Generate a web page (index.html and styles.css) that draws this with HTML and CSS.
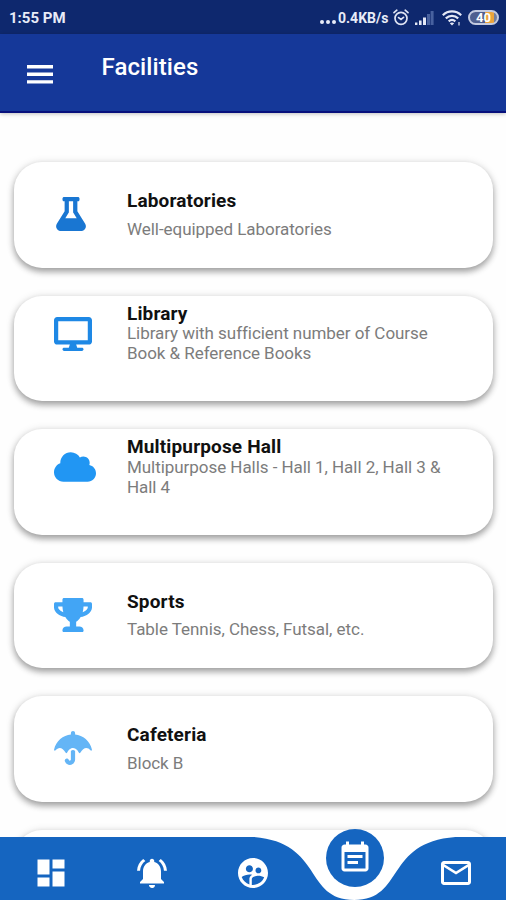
FILE: index.html
```
<!DOCTYPE html>
<html lang="en">
	<head>
		<meta charset="utf-8">
		<title>Facilities</title>
		<link rel="stylesheet" href="styles.css">
	</head>
	<body>
		<div class="status">
			<span class="time">1:55 PM</span>
			<span class="dots"><i></i><i></i><i></i></span>
			<span class="speed">0.4KB/s</span>
			<svg class="alarm" width="16" height="17" viewBox="0 0 16 17" fill="none" stroke="#dfe4f4" stroke-width="1.7" stroke-linecap="round">
				<circle cx="8" cy="9.3" r="6"/>
				<path d="M1 3.6L3.8 1.2M15 3.6L12.2 1.2M5.6 8.6L8 10.4l2.5-2"/>
			</svg>
			<svg class="signal" width="19" height="16" viewBox="0 0 19 16" fill="#e4e8f6">
				<path d="M0 12.5h2.4v2.5H0zM4 10.5h2.6v4.5H4zM8 7.5h3v7.5H8z"/>
				<path d="M12 4h3v11H12zM15.6 1h3v14h-3z" fill="#48619f"/>
			</svg>
			<svg class="wifi" width="20" height="16" viewBox="0 0 20 16" fill="none" stroke="#e4e8f6" stroke-width="2.2">
				<path d="M.8 5.2c5.2-5 13.2-5 18.4 0M3.8 8.4c3.6-3.4 8.8-3.4 12.4 0M6.7 11.4c2-1.8 4.6-1.8 6.6 0"/>
				<path d="M10 15.4l-2.2-2.2c1.3-1 3.1-1 4.4 0z" fill="#e4e8f6" stroke="none"/>
				<path d="M17 12v3.4" stroke-width="1.2"/>
			</svg>
			<span class="battery">40</span>
		</div>
		<div class="header">
			<svg class="menu" width="26" height="19" viewBox="0 0 26 19" fill="#fff"><path d="M0 0h26v3.4H0zM0 7.6h26V11H0zM0 15.2h26v3.4H0z"/></svg>
			<h1>Facilities</h1>
		</div>

		<div class="list">
			<div class="card">
				<div class="icon flask">
					<svg width="30" height="34" viewBox="0 0 448 512" fill="#1976d2"><path d="M437.2 403.5L320 215V64h8c13.3 0 24-10.7 24-24V24c0-13.3-10.7-24-24-24H120c-13.3 0-24 10.7-24 24v16c0 13.3 10.7 24 24 24h8v151L10.8 403.5C-18.5 450.6 15.3 512 70.9 512h306.2c55.7 0 89.4-61.5 60.1-108.5zM137.9 320l48.2-77.6c3.7-5.2 5.8-11.6 5.8-18.4V64h64v160c0 6.9 2.2 13.2 5.8 18.4l48.2 77.6h-172z"/></svg>
				</div>
				<div class="text">
					<h2>Laboratories</h2>
					<p>Well-equipped Laboratories</p>
				</div>
			</div>
			<div class="card two">
				<div class="icon">
					<svg width="38" height="34" viewBox="0 0 576 512" fill="#1e88e5"><path d="M528 0H48C21.5 0 0 21.5 0 48v320c0 26.5 21.5 48 48 48h192l-16 48h-72c-13.3 0-24 10.7-24 24s10.7 24 24 24h272c13.3 0 24-10.7 24-24s-10.7-24-24-24h-72l-16-48h192c26.5 0 48-21.5 48-48V48c0-26.5-21.5-48-48-48zm-16 352H64V64h448v288z"/></svg>
				</div>
				<div class="text">
					<h2>Library</h2>
					<p>Library with sufficient number of Course<br>Book &amp; Reference Books</p>
				</div>
			</div>
			<div class="card two">
				<div class="icon">
					<svg width="42" height="34" viewBox="0 0 640 512" fill="#2196f3"><path d="M537.6 226.6c4.1-10.7 6.4-22.4 6.4-34.6 0-53-43-96-96-96-19.7 0-38.1 6-53.3 16.2C367 64.2 315.3 32 256 32c-88.4 0-160 71.6-160 160 0 2.7.1 5.4.2 8.1C40.2 219.8 0 273.2 0 336c0 79.5 64.5 144 144 144h368c70.7 0 128-57.3 128-128 0-61.9-44-113.6-102.4-125.4z"/></svg>
				</div>
				<div class="text">
					<h2>Multipurpose Hall</h2>
					<p>Multipurpose Halls - Hall 1, Hall 2, Hall 3 &amp;<br>Hall 4</p>
				</div>
			</div>
			<div class="card">
				<div class="icon">
					<svg width="38" height="34" viewBox="0 0 576 512" fill="#42a5f5"><path d="M552 64H448V24c0-13.3-10.7-24-24-24H152c-13.3 0-24 10.7-24 24v40H24C10.7 64 0 74.7 0 88v56c0 35.7 22.5 72.4 61.9 100.7 31.5 22.7 69.8 37.1 110 41.7C203.3 338.5 240 360 240 360v72h-48c-35.3 0-64 20.7-64 56v12c0 6.6 5.4 12 12 12h296c6.6 0 12-5.4 12-12v-12c0-35.3-28.7-56-64-56h-48v-72s36.7-21.5 68.1-73.6c40.3-4.6 78.6-19 110-41.7 39.3-28.3 61.9-65 61.9-100.7V88c0-13.3-10.7-24-24-24zM99.3 192.8C74.9 175.2 64 155.6 64 144v-16h64.2c1 32.6 5.8 61.2 12.8 86.2-15.1-5.2-29.2-12.4-41.7-21.4zM512 144c0 16.1-17.7 36.1-35.3 48.8-12.5 9-26.7 16.2-41.8 21.4 7-25 11.8-53.6 12.8-86.2H512v16z"/></svg>
				</div>
				<div class="text">
					<h2>Sports</h2>
					<p>Table Tennis, Chess, Futsal, etc.</p>
				</div>
			</div>
			<div class="card">
				<div class="icon">
					<svg width="38" height="34" viewBox="0 0 576 512" fill="#64b5f6"><path d="M575.7 280.8C547.1 144.5 437.3 62.6 320 49.9V32c0-17.7-14.3-32-32-32s-32 14.3-32 32v17.9C138.3 62.6 29.5 144.5.3 280.8c-2.2 10.1 8.5 21.3 18.7 11.4 52-55 107.7-52.4 158.6 37 5.3 9.5 14.9 8.6 19.7 0 20.2-35.4 44.9-73.2 90.7-73.2 58.5 0 88.2 68.8 90.7 73.2 4.8 8.6 14.4 9.5 19.7 0 51-89.5 107.1-91.4 158.6-37 10.3 10 20.9-1.3 18.7-11.4zM256 301.7V432c0 8.8-7.2 16-16 16-7.8 0-13.2-5.3-15.1-10.7-5.9-16.7-24.1-25.4-40.8-19.5-16.7 5.9-25.4 24.2-19.5 40.8 11.2 31.9 41.6 53.3 75.4 53.3 44.1 0 80-35.9 80-80V301.6c-9.1-7.9-19.8-13.6-32-13.6-12.3.1-22.4 4.8-32 13.7z"/></svg>
				</div>
				<div class="text">
					<h2>Cafeteria</h2>
					<p>Block B</p>
				</div>
			</div>
			<div class="card"></div>
		</div>

		<!-- bottom bar, lies over the list -->
		<div class="nav">
			<svg class="curve" width="506" height="63" viewBox="0 0 506 63" fill="#1565c0"><path d="M0 0H253C323.8 5.3 303.6 63 354.2 63C404.8 63 384.6 5.3 455.4 0H506V63H0z"/></svg>
			<div class="items">
				<svg width="36" height="36" viewBox="0 0 24 24"><path d="M3 13h8V3H3v10zm0 8h8v-6H3v6zm10 0h8V11h-8v10zm0-18v6h8V3h-8z"/></svg>
				<svg width="36" height="36" viewBox="0 0 24 24"><path d="M7.58 4.08L6.15 2.65C3.75 4.48 2.17 7.3 2.03 10.5h2c.15-2.65 1.51-4.97 3.55-6.42zm12.39 6.42h2c-.15-3.2-1.73-6.02-4.12-7.85l-1.42 1.43c2.02 1.45 3.39 3.77 3.54 6.42zM18 11c0-3.07-1.64-5.64-4.5-6.32V4c0-.83-.67-1.5-1.5-1.5s-1.5.67-1.5 1.5v.68C7.63 5.36 6 7.92 6 11v5l-2 2v1h16v-1l-2-2v-5zm-6 11c.14 0 .27-.01.4-.04.65-.14 1.18-.58 1.44-1.18.1-.24.15-.5.15-.78h-4c.01 1.1.9 2 2.01 2z"/></svg>
				<svg width="36" height="36" viewBox="0 0 24 24"><path d="M11.99 2c-5.52 0-10 4.48-10 10s4.48 10 10 10 10-4.48 10-10-4.48-10-10-10zm3.61 6.34c1.07 0 1.93.86 1.93 1.93 0 1.07-.86 1.93-1.93 1.93-1.07 0-1.93-.86-1.93-1.93-.01-1.07.86-1.93 1.93-1.93zm-6-1.58c1.3 0 2.36 1.06 2.36 2.36 0 1.3-1.06 2.36-2.36 2.36s-2.36-1.06-2.36-2.36c0-1.31 1.05-2.36 2.36-2.36zm0 9.13v3.75c-2.4-.75-4.3-2.6-5.14-4.96 1.05-1.12 3.67-1.69 5.14-1.69.53 0 1.2.08 1.9.22-1.64.87-1.9 2.02-1.9 2.68zM11.99 20c-.27 0-.53-.01-.79-.04v-4.07c0-1.42 2.94-2.13 4.4-2.13 1.07 0 2.92.39 3.84 1.15-1.17 2.97-4.06 5.09-7.45 5.09z"/></svg>
				<div class="active">
					<svg width="36" height="36" viewBox="0 0 24 24"><path d="M17 10H7v2h10v-2zm2-7h-1V1h-2v2H8V1H6v2H5c-1.11 0-1.99.9-1.99 2L3 19c0 1.1.89 2 2 2h14c1.1 0 2-.9 2-2V5c0-1.1-.9-2-2-2zm0 16H5V8h14v11zm-5-5H7v2h7v-2z"/></svg>
				</div>
				<svg class="mail" width="36" height="36" viewBox="0 0 24 24"><path d="M20 4H4c-1.1 0-1.99.9-1.99 2L2 18c0 1.1.9 2 2 2h16c1.1 0 2-.9 2-2V6c0-1.1-.9-2-2-2zm0 14H4V8l8 5 8-5v10zm-8-7L4 6h16l-8 5z"/></svg>
			</div>
		</div>
	</body>
</html>
```
FILE: styles.css
```
* {
	box-sizing: border-box;
}
body {
	margin: 0;
	width: 506px;
	height: 900px;
	overflow: hidden;
	position: relative;
	background: #fefefe;
	font-family: Roboto, sans-serif;
}
h1, h2, p {
	margin: 0;
}
svg {
	display: block;
	flex: none;
}
.status {
	display: flex;
	align-items: center;
	height: 34px;
	padding: 1px 7px 0 9px;
	background: #0e286e;
	color: #e8ecf8;
	font-size: 15px;
	font-weight: 700;
}
.time {
	flex: 1;
}
.dots {
	display: flex;
	gap: 2px;
	padding: 8px 2px 0 0;
}
.dots i {
	width: 4px;
	height: 4px;
	border-radius: 50%;
	background: #e8ecf8;
}
.speed {
	font-size: 14px;
	width: 50px;
	white-space: nowrap;
}
.alarm {
	margin-left: 5px;
}
.signal {
	margin-left: 6px;
}
.wifi {
	margin-left: 8px;
}
.battery {
	width: 31px;
	height: 15px;
	margin-left: 6px;
	border: 2px solid #c3cae0;
	border-radius: 8px;
	background: linear-gradient(90deg, #4f5f90 0 54%, #eba43c 54% 88%, #75809f 88%);
	color: #fff;
	font-size: 13px;
	line-height: 11px;
	text-align: center;
}
.header {
	display: flex;
	height: 79px;
	padding: 18px 0 0 27px;
	background: #153899;
	border-bottom: 2px solid #07107c;
	box-shadow: 0 1px 4px rgba(0,0,0,.25);
	color: #fff;
}
.menu {
	margin-top: 13px;
}
.header h1 {
	margin-left: 48.5px;
	font-size: 24px;
	line-height: 30px;
	font-weight: 500;
	letter-spacing: .1px;
}
.list {
	display: flex;
	flex-direction: column;
	gap: 28px;
	padding: 49px 13.5px 0 14px;
}
.card {
	display: flex;
	flex: none;
	height: 105.5px;
	padding: 27px 0 0 40px;
	border-radius: 28px;
	background: #fff;
	box-shadow: 0 4px 6px rgba(0,0,0,.3), 0 1px 8px rgba(0,0,0,.15);
}
.icon {
	width: 73px;
	padding-top: 8px;
}
.flask {
	padding-left: 2px;
}
.text h2 {
	color: #111;
	font-size: 19px;
	line-height: 24px;
	font-weight: 700;
	letter-spacing: .15px;
}
.text p {
	margin-top: 5.5px;
	color: #7c7c7c;
	font-size: 17px;
	line-height: 20px;
	letter-spacing: -.05px;
	white-space: nowrap;
}
.two {
	padding-top: 6px;
}
.two .icon {
	padding-top: 15px;
}
.two .text p {
	margin-top: -2.5px;
}
.nav {
	position: absolute;
	left: 0;
	bottom: 0;
	width: 506px;
	height: 63px;
}
.curve {
	position: absolute;
	top: 0;
	left: 0;
}
.items {
	position: relative;
	display: grid;
	grid-template-columns: repeat(5, 1fr);
	justify-items: center;
	padding-top: 17.5px;
}
.items svg {
	fill: #fff;
}
.active {
	display: flex;
	align-items: center;
	justify-content: center;
	width: 58px;
	height: 58px;
	margin: -26px 0 0 1px;
	border-radius: 50%;
	background: #1565c0;
}
.mail {
	margin-left: 1px;
}
```
